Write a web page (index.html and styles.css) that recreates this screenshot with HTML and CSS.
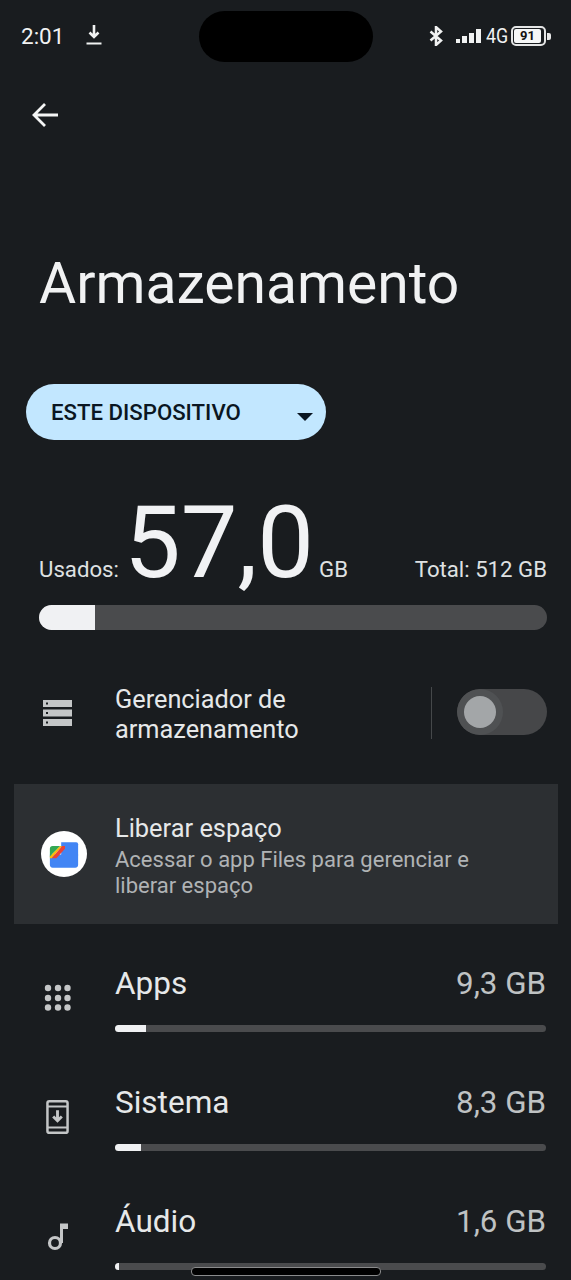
FILE: index.html
```html
<!DOCTYPE html>
<html lang="pt-BR">
<head>
    <meta charset="UTF-8">
    <meta name="viewport" content="width=device-width, initial-scale=1.0">
    <title>Armazenamento</title>
    <link rel="stylesheet" href="styles.css">
</head>
<body>
    <div class="screen">
        <div class="status-bar">
            <div class="status-left">
                <span class="time">2:01</span>
                <svg class="download-icon" width="18" height="22" viewBox="0 0 18 22">
                    <path d="M9 1v11M4.500 8.500 9 13l4.500-4.500" fill="none" stroke="#f1f2f2" stroke-width="2.600"/>
                    <path d="M1.500 19.500h15" stroke="#f1f2f2" stroke-width="2"/>
                </svg>
            </div>
            <div class="status-right">
                <svg width="14" height="20" viewBox="0 0 14 20">
                    <path d="M1.500 5.500 12 14.500 7 19V1l5 4.500L1.500 14.500" fill="none" stroke="#f1f2f2" stroke-width="2.500"/>
                </svg>
                <div class="signal">
                    <i class="s1"></i><i class="s2"></i><i class="s3"></i><i class="s4"></i>
                </div>
                <span class="network">4G</span>
                <div class="battery"><span>91</span></div>
                <div class="battery-tip"></div>
            </div>
        </div>
        <div class="camera"></div>

        <div class="toolbar">
            <svg width="28" height="28" viewBox="0 0 28 28">
                <path d="M27 14H3M14 3 3 14l11 11" fill="none" stroke="#f4f5f5" stroke-width="2.800"/>
            </svg>
        </div>

        <h1>Armazenamento</h1>

        <div class="volume-picker">
            <span>ESTE DISPOSITIVO</span>
            <div class="caret"></div>
        </div>

        <div class="usage">
            <span class="usage-label">Usados:</span>
            <span class="usage-number">57,0</span>
            <span class="usage-unit">GB</span>
            <span class="usage-total">Total: 512 GB</span>
        </div>
        <div class="usage-bar"><div class="usage-fill"></div></div>

        <div class="manager-row">
            <div class="icon-col">
                <svg width="30" height="28" viewBox="0 0 30 28">
                    <path fill="#c4c6c7" fill-rule="evenodd" d="M1 1h29v7H1zM4 3.500v2h2v-2zM1 10.500h29v7H1zM4 13v2h2v-2zM1 20h29v7H1zM4 22.500v2h2v-2z"/>
                </svg>
            </div>
            <div class="manager-text">Gerenciador de<br>armazenamento</div>
            <div class="divider"></div>
            <div class="toggle"><div class="toggle-knob"></div></div>
        </div>

        <div class="free-card">
            <div class="icon-col">
                <div class="files-logo">
                    <svg width="34" height="28" viewBox="0 0 34 28">
                        <path fill="#4285f4" d="M2 14h30v11a3 3 0 0 1-3 3H5a3 3 0 0 1-3-3z"/>
                        <path fill="#4285f4" d="M14 1h16a2 2 0 0 1 2 2v12H14z"/>
                        <path fill="#34a853" d="M2 8a3 3 0 0 1 3-3h8L2 16z"/>
                        <path fill="#fbbc04" d="M2 16 13 5h2L4 18H2z"/>
                        <path fill="#ea4335" d="M15 5h3v3L9 18H4z"/>
                    </svg>
                </div>
            </div>
            <div class="free-text">
                <div class="free-title">Liberar espaço</div>
                <div class="free-sub">Acessar o app Files para gerenciar e liberar espaço</div>
            </div>
        </div>

        <div class="category">
            <div class="icon-col">
                <svg width="28" height="28" viewBox="0 0 28 28" fill="#c4c6c7">
                    <circle cx="4" cy="4" r="3.200"/><circle cx="14" cy="4" r="3.200"/><circle cx="23.500" cy="4" r="3.200"/>
                    <circle cx="4" cy="14" r="3.200"/><circle cx="14" cy="14" r="3.200"/><circle cx="23.500" cy="14" r="3.200"/>
                    <circle cx="4" cy="23.500" r="3.200"/><circle cx="14" cy="23.500" r="3.200"/><circle cx="23.500" cy="23.500" r="3.200"/>
                </svg>
            </div>
            <div class="category-body">
                <div class="category-head"><span>Apps</span><span class="category-size">9,3 GB</span></div>
                <div class="category-bar"><div class="category-fill" style="width: 7.200%"></div></div>
            </div>
        </div>

        <div class="category">
            <div class="icon-col">
                <svg width="23" height="36" viewBox="0 0 24 36">
                    <rect x="1.500" y="1.500" width="21" height="33" rx="2" fill="none" stroke="#c4c6c7" stroke-width="2.600"/>
                    <path d="M2 7h20M2 29h20" stroke="#c4c6c7" stroke-width="2"/>
                    <path d="M12 11v11M7.500 17.500 12 22l4.500-4.500" fill="none" stroke="#c4c6c7" stroke-width="3"/>
                </svg>
            </div>
            <div class="category-body">
                <div class="category-head"><span>Sistema</span><span class="category-size">8,3 GB</span></div>
                <div class="category-bar"><div class="category-fill" style="width: 6%"></div></div>
            </div>
        </div>

        <div class="category">
            <div class="icon-col">
                <svg width="22" height="30" viewBox="0 0 22 30">
                    <circle cx="8" cy="22" r="5.500" fill="none" stroke="#c4c6c7" stroke-width="3.200"/>
                    <path d="M13 22V2.500h8V8h-5v14z" fill="#c4c6c7"/>
                </svg>
            </div>
            <div class="category-body">
                <div class="category-head"><span>Áudio</span><span class="category-size">1,6 GB</span></div>
                <div class="category-bar"><div class="category-fill" style="width: 1%"></div></div>
            </div>
        </div>

        <div class="home-indicator"></div>
    </div>
</body>
</html>
```

FILE: styles.css
```css
* {
    margin: 0;
    padding: 0;
    box-sizing: border-box;
    font-family: Roboto, "Liberation Sans", sans-serif;
}

body {
    background-color: #191c1f;
    color: #e6e8e9;
}

.screen {
    position: relative;
    width: 571px;
    height: 1280px;
    overflow: hidden;
}

/* status bar */
.status-bar {
    display: flex;
    justify-content: space-between;
    align-items: center;
    height: 72px;
    padding: 0 21px;
    color: #f1f2f2;
}

.status-left {
    display: flex;
    align-items: center;
    gap: 21px;
}

.time {
    font-size: 22.500px;
}

.download-icon {
    margin-top: -2px;
}

.status-right {
    display: flex;
    align-items: center;
    margin-right: -1px;
}

.signal {
    display: flex;
    align-items: flex-end;
    gap: 2px;
    height: 14px;
    margin-left: 13px;
}

.signal i {
    display: block;
    width: 5px;
    background: #f1f2f2;
}

.signal .s1 { height: 4px; width: 4px; }
.signal .s2 { height: 7px; }
.signal .s3 { height: 10px; }
.signal .s4 { height: 14px; }

.network {
    width: 22px;
    margin-left: 5px;
    font-size: 21px;
    transform: scaleX(0.85);
    transform-origin: left center;
}

.battery {
    display: flex;
    width: 35px;
    height: 20px;
    margin-left: 3px;
    padding: 1px 3px 1px 1px;
    background: #191c1f;
    border: 2px solid #e4e5e5;
    border-radius: 5px;
}

.battery span {
    flex: 1;
    background: #f6f7f7;
    border-radius: 2px;
    color: #111;
    font-size: 13px;
    font-weight: 700;
    line-height: 14px;
    text-align: center;
}

.battery-tip {
    width: 4px;
    height: 7px;
    margin-left: 1px;
    background: #e8e8e8;
    border-radius: 0 2px 2px 0;
}

.camera {
    position: absolute;
    top: 11px;
    left: 199px;
    width: 174px;
    height: 51px;
    background: #000;
    border-radius: 26px;
}

/* header */
.toolbar {
    display: flex;
    align-items: center;
    height: 64px;
    margin-top: 11px;
    padding-left: 31px;
}

h1 {
    margin-top: 104px;
    padding-left: 39px;
    font-size: 57px;
    font-weight: 400;
    line-height: 66px;
    color: #f1f2f3;
}

.volume-picker {
    display: flex;
    justify-content: space-between;
    align-items: center;
    width: 300px;
    height: 56px;
    margin: 67px 0 0 26px;
    padding: 0 13px 0 25px;
    background: #c2e7ff;
    border-radius: 28px;
    color: #0a1622;
    font-size: 22.200px;
    font-weight: 500;
}

.caret {
    width: 0;
    height: 0;
    margin-top: 9px;
    border-left: 8px solid transparent;
    border-right: 8px solid transparent;
    border-top: 8px solid #0a1622;
}

/* total usage */
.usage {
    display: flex;
    align-items: baseline;
    height: 121px;
    margin-top: 42px;
    padding: 0 24px 0 39px;
    color: #dfe1e2;
    font-size: 22.200px;
    line-height: 121px;
}

.usage-number {
    margin: 0 3px 0 5px;
    font-size: 101px;
    color: #f1f2f4;
}

.usage-unit {
    margin-left: 2px;
}

.usage-total {
    margin-left: auto;
}

.usage-bar {
    height: 25px;
    margin: 2px 24px 0 39px;
    background: #4a4b4d;
    border-radius: 13px;
    overflow: hidden;
}

.usage-fill {
    width: 56px;
    height: 100%;
    background: #f0f1f3;
}

.icon-col {
    display: flex;
    justify-content: center;
    flex-shrink: 0;
    width: 88px;
    padding-left: 28px;
}

/* storage manager row */
.manager-row {
    display: flex;
    align-items: center;
    height: 62px;
    margin-top: 52px;
    padding-right: 24px;
}

.manager-row .icon-col {
    width: 115px;
    padding: 0 2px 0 0;
}

.manager-text {
    flex: 1;
    padding-top: 4px;
    font-size: 25.300px;
    line-height: 30px;
}

.divider {
    width: 1px;
    height: 52px;
    margin-right: 25px;
    background: #45484a;
}

.toggle {
    display: flex;
    align-items: center;
    width: 90px;
    height: 46px;
    margin-top: -2px;
    padding-left: 7px;
    background: #464749;
    border-radius: 23px;
    overflow: hidden;
}

.toggle-knob {
    width: 32px;
    height: 32px;
    background: #a3a6a8;
    border-radius: 50%;
    box-shadow: 0 0 0 7px #4f5153;
}

/* free up space card */
.free-card {
    display: flex;
    align-items: center;
    height: 140px;
    margin: 40px 13px 0 14px;
    padding-right: 60px;
    background: #2c2f32;
}

.free-card .icon-col {
    width: 101px;
    padding-left: 27px;
    justify-content: flex-start;
}

.files-logo {
    display: flex;
    justify-content: center;
    align-items: center;
    width: 46px;
    height: 46px;
    background: #fff;
    border-radius: 50%;
}

.files-logo svg {
    width: 32px;
    height: 27px;
}

.free-text {
    padding-top: 4px;
}

.free-title {
    font-size: 25.400px;
    line-height: 30px;
    color: #e6e8e9;
}

.free-sub {
    margin-top: 4px;
    font-size: 22px;
    line-height: 26px;
    color: #b0b3b5;
}

/* category rows */
.category {
    display: flex;
    height: 119px;
    padding: 0 25px 0 0;
}

.free-card + .category {
    margin-top: 36px;
}

.category .icon-col {
    width: 115px;
    height: 70px;
    padding: 5px 0 0;
    align-items: center;
}

.category-body {
    flex: 1;
}

.category-head {
    display: flex;
    justify-content: space-between;
    align-items: center;
    height: 46px;
    font-size: 31.500px;
    color: #e6e8e9;
}

.category-size {
    font-size: 31.300px;
    color: #bfc2c3;
}

.category-bar {
    height: 7px;
    margin-top: 19px;
    background: #4a4b4d;
    border-radius: 4px;
    overflow: hidden;
}

.category-fill {
    height: 100%;
    background: #f0f1f3;
}

.home-indicator {
    position: absolute;
    left: 191px;
    bottom: 4px;
    width: 190px;
    height: 9px;
    background: #000;
    border: 1px solid #8a8b8c;
    border-radius: 4px;
}
```
